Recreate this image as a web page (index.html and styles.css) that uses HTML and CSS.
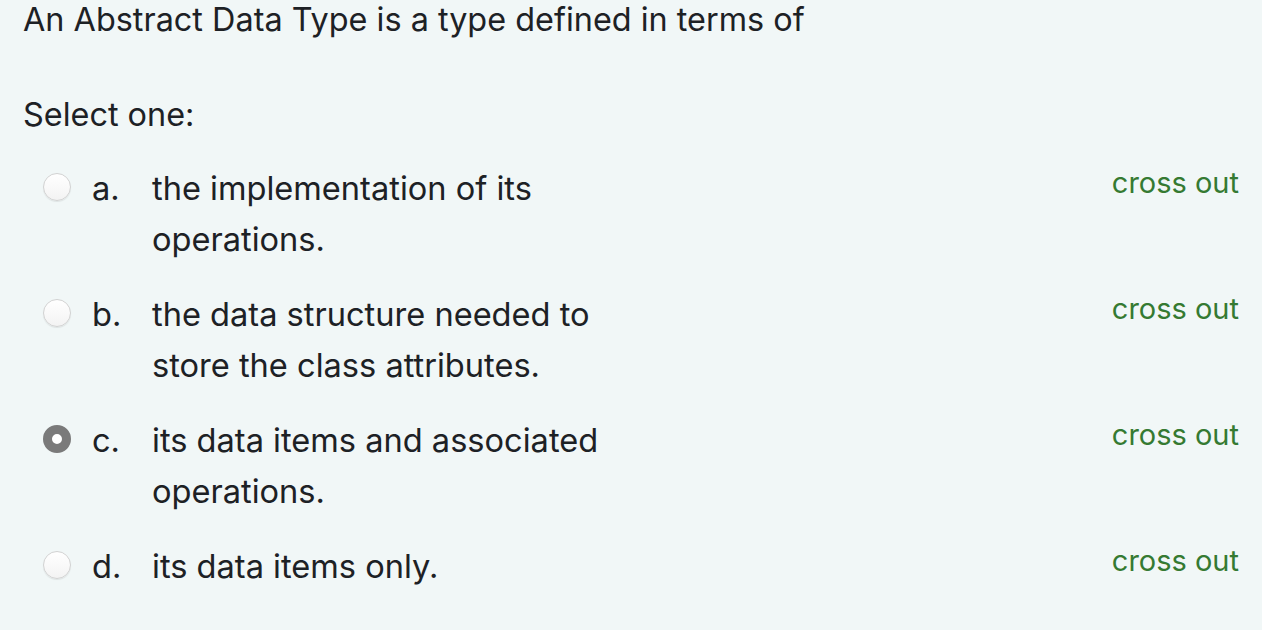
FILE: index.html
```html
<!DOCTYPE html>
<html>
<head>
<meta charset="utf-8">
<link rel="stylesheet" href="styles.css">
</head>
<body>
<div class="page">
  <div class="qtext">An Abstract Data Type is a type defined in terms of</div>
  <div class="prompt">Select one:</div>
  <div class="answers">
    <div class="opt">
      <span class="radio"></span>
      <span class="letter">a.</span>
      <span class="text">the implementation of its<br>operations.</span>
      <span class="cross">cross out</span>
    </div>
    <div class="opt">
      <span class="radio"></span>
      <span class="letter">b.</span>
      <span class="text">the data structure needed to<br>store the class attributes.</span>
      <span class="cross">cross out</span>
    </div>
    <div class="opt">
      <span class="radio checked"></span>
      <span class="letter">c.</span>
      <span class="text">its data items and associated<br>operations.</span>
      <span class="cross">cross out</span>
    </div>
    <div class="opt">
      <span class="radio"></span>
      <span class="letter">d.</span>
      <span class="text">its data items only.</span>
      <span class="cross">cross out</span>
    </div>
  </div>
</div>
</body>
</html>
```
FILE: styles.css
```css
html, body {
  margin: 0;
  padding: 0;
  background: #f1f7f7;
}
body {
  font-family: Inter, "Liberation Sans", sans-serif;
  color: #1d2125;
  width: 1262px;
  height: 630px;
  overflow: hidden;
}
.page {
  padding: 0 23px 0 23px;
}
.qtext {
  font-size: 32.4px;
  line-height: 40px;
}
.prompt {
  font-size: 32.4px;
  line-height: 40px;
  margin-top: 55px;
}
.answers {
  display: flex;
  flex-direction: column;
  gap: 24px;
  margin-top: 28px;
}
.opt {
  display: flex;
  align-items: flex-start;
  font-size: 32.6px;
  line-height: 51px;
}
.radio {
  flex: none;
  width: 28px;
  height: 28px;
  border-radius: 50%;
  box-sizing: border-box;
  border: 1px solid #d2d2d2;
  background: linear-gradient(#ffffff, #f3f3f3);
  box-shadow: 0 1px 1px rgba(0,0,0,0.08);
  margin: 10px 0 0 20px;
}
.radio.checked {
  border: 9px solid #7a7a7a;
  background: #ffffff;
  box-shadow: none;
}
.letter {
  width: 60px;
  margin-left: 21px;
  flex: none;
}
.text {
  flex: 1;
}
.cross {
  font-size: 29px;
  line-height: 40px;
  color: #357a32;
  flex: none;
}
```
